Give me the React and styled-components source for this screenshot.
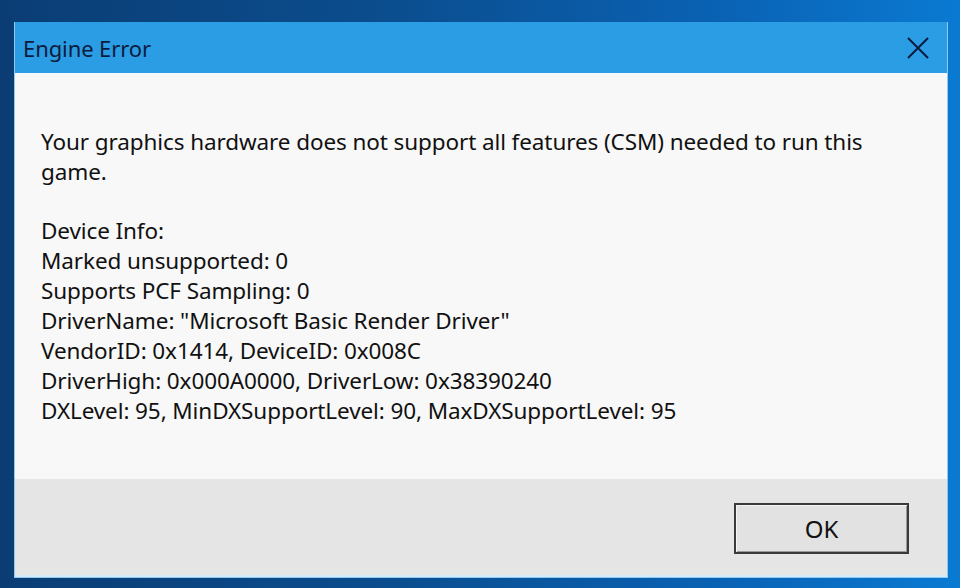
import styled, { createGlobalStyle } from "styled-components";

const GlobalStyle = createGlobalStyle`
  html, body {
    margin: 0;
    padding: 0;
    width: 960px;
    height: 588px;
    overflow: hidden;
  }
`

const Desktop = styled.div`
  width: 960px;
  height: 588px;
  box-sizing: border-box;
  padding: 22px 12px 10px 14px;
  display: flex;
  background: linear-gradient(90deg, #0b3d74 0%, #0b4d8e 40%, #0a62b4 75%, #0a7ad2 100%);
  font-family: "Noto Sans", "Open Sans", sans-serif;
`

const Window = styled.div`
  flex: 1;
  display: flex;
  flex-direction: column;
  border: 1px solid #8fcaf2;
  border-top: none;
  background: #f8f8f8;
`

const TitleBar = styled.div`
  height: 51px;
  flex-shrink: 0;
  display: flex;
  align-items: center;
  justify-content: space-between;
  padding: 0 18px 0 8px;
  background: #2a9de4;
  color: #0d1b3e;
`

const Title = styled.span`
  font-size: 22px;
  letter-spacing: -0.1px;
  padding-top: 1px;
`

const CloseButton = styled.button`
  border: none;
  background: none;
  padding: 0;
  width: 22px;
  height: 22px;
  display: flex;
  align-items: center;
  justify-content: center;
  cursor: pointer;
`

const Content = styled.div`
  flex: 1;
  padding: 54px 26px 0;
  color: #111;
  font-size: 22.5px;
  line-height: 30px;
  letter-spacing: -0.1px;
`

const Paragraph = styled.p`
  margin: 0 0 ${({ gap }) => gap || 0}px;
`

const Line = styled.div`
  white-space: nowrap;
`

const Footer = styled.div`
  height: 98px;
  flex-shrink: 0;
  display: flex;
  justify-content: flex-end;
  align-items: flex-start;
  padding: 24px 38px 0 0;
  box-sizing: border-box;
  background: #e6e5e5;
  border-bottom: 2px solid #d6ecfa;
`

const OkButton = styled.button`
  width: 175px;
  height: 51px;
  box-sizing: border-box;
  border: 2px solid #3a3a3a;
  box-shadow: inset 1px 1px 0 #f4f4f4, inset -1px -1px 0 #9a9a9a;
  background: #e2e2e2;
  font-family: inherit;
  font-size: 24px;
  color: #111;
  cursor: pointer;
`

const info = [
  "Device Info:",
  "Marked unsupported: 0",
  "Supports PCF Sampling: 0",
  'DriverName: "Microsoft Basic Render Driver"',
  "VendorID: 0x1414, DeviceID: 0x008C",
  "DriverHigh: 0x000A0000, DriverLow: 0x38390240",
  "DXLevel: 95, MinDXSupportLevel: 90, MaxDXSupportLevel: 95",
]

function App() {
  return (
    <Desktop>
      <GlobalStyle />
      <Window>
        <TitleBar>
          <Title>Engine Error</Title>
          <CloseButton aria-label="Close">
            <svg width="22" height="22" viewBox="0 0 22 22">
              <path d="M1 1 L21 21 M21 1 L1 21" stroke="#0d1b3e" strokeWidth="2" />
            </svg>
          </CloseButton>
        </TitleBar>
        <Content>
          <Paragraph gap={29}>
            Your graphics hardware does not support all features (CSM) needed to run this
            <br />
            game.
          </Paragraph>
          <Paragraph>
            {info.map((line) => (
              <Line key={line}>{line}</Line>
            ))}
          </Paragraph>
        </Content>
        <Footer>
          <OkButton>OK</OkButton>
        </Footer>
      </Window>
    </Desktop>
  )
}

export default App;
